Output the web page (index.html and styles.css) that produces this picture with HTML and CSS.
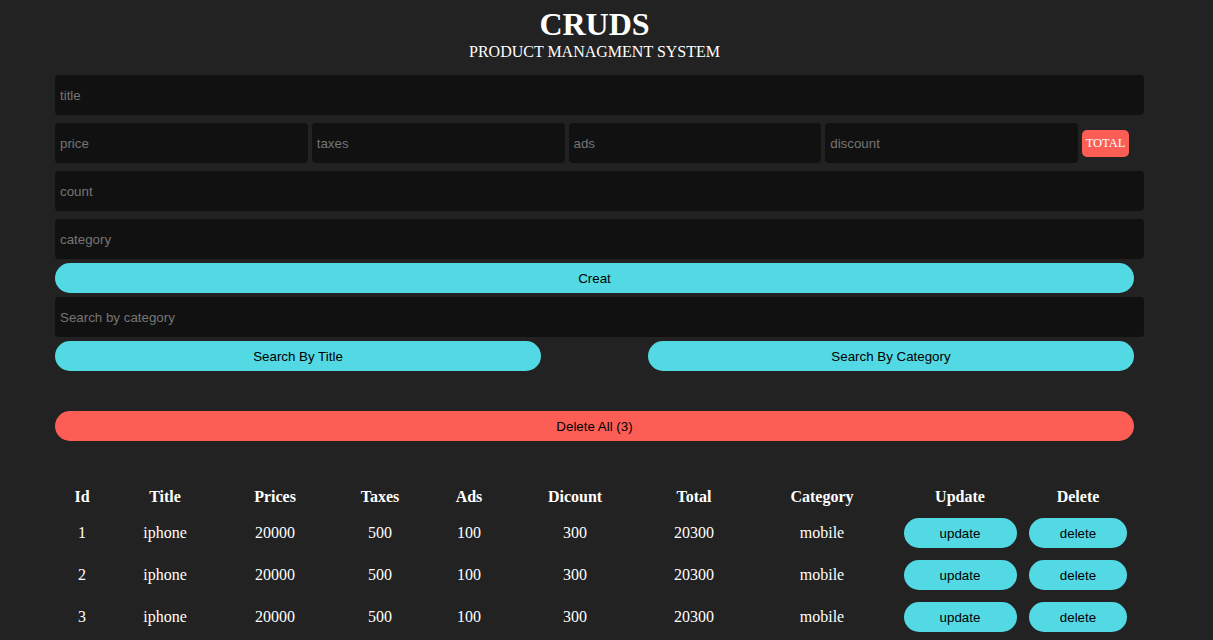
FILE: index.html
```html
<!DOCTYPE html>
<html>
<head>
<meta charset="utf-8">
<title>CRUDS</title>
<link rel="stylesheet" href="styles.css">
</head>
<body>
<div class="crud">
  <div class="head">
    <h1 class="logo">CRUDS</h1>
    <p class="sub">PRODUCT MANAGMENT SYSTEM</p>
  </div>
  <div class="inputs">
    <input class="field" type="text" placeholder="title">
    <div class="price">
      <input class="field small" type="text" placeholder="price">
      <input class="field small" type="text" placeholder="taxes">
      <input class="field small" type="text" placeholder="ads">
      <input class="field small" type="text" placeholder="discount">
      <small class="total">TOTAL</small>
    </div>
    <input class="field" type="text" placeholder="count">
    <input class="field last" type="text" placeholder="category">
    <button class="btn wide">Creat</button>
  </div>
  <div class="search">
    <input class="field" type="text" placeholder="Search by category">
    <div class="btnsearch">
      <button class="btn half">Search By Title</button>
      <button class="btn half">Search By Category</button>
    </div>
  </div>
  <button class="btn wide danger">Delete All (3)</button>
  <table class="outputs">
    <colgroup>
      <col class="c-id"><col class="c-title"><col class="c-price"><col class="c-tax"><col class="c-ads"><col class="c-disc"><col class="c-total"><col class="c-cat"><col class="c-upd"><col class="c-del">
    </colgroup>
    <thead>
      <tr><th>Id</th><th>Title</th><th>Prices</th><th>Taxes</th><th>Ads</th><th>Dicount</th><th>Total</th><th>Category</th><th>Update</th><th>Delete</th></tr>
    </thead>
    <tbody>
      <tr><td>1</td><td>iphone</td><td>20000</td><td>500</td><td>100</td><td>300</td><td>20300</td><td>mobile</td><td><button class="btn upd">update</button></td><td><button class="btn del">delete</button></td></tr>
      <tr><td>2</td><td>iphone</td><td>20000</td><td>500</td><td>100</td><td>300</td><td>20300</td><td>mobile</td><td><button class="btn upd">update</button></td><td><button class="btn del">delete</button></td></tr>
      <tr><td>3</td><td>iphone</td><td>20000</td><td>500</td><td>100</td><td>300</td><td>20300</td><td>mobile</td><td><button class="btn upd">update</button></td><td><button class="btn del">delete</button></td></tr>
    </tbody>
  </table>
</div>
</body>
</html>
```
FILE: styles.css
```css
html, body {
  margin: 0;
  padding: 0;
  background: #222222;
  color: #ffffff;
  font-family: "Liberation Serif", "Times New Roman", serif;
  overflow: hidden;
}
.crud {
  width: 1089px;
  margin-left: 55px;
  display: flex;
  flex-direction: column;
}
.head {
  width: 1079px;
  text-align: center;
  padding-top: 6px;
}
.logo {
  margin: 0;
  font-size: 32px;
  line-height: 37px;
  font-weight: bold;
}
.sub {
  margin: 0;
  font-size: 16px;
  line-height: 18px;
}
.inputs {
  display: flex;
  flex-direction: column;
  margin-top: 14px;
}
.field {
  box-sizing: border-box;
  width: 1089px;
  height: 40px;
  border: none;
  outline: none;
  border-radius: 4px;
  background: #111111;
  color: #ffffff;
  padding: 0 5px;
  font-family: "Liberation Sans", Arial, sans-serif;
  font-size: 13.33px;
  margin: 0 0 8px 0;
}
.field::placeholder {
  color: #757575;
}
.field.last {
  margin-bottom: 4px;
}
.price {
  display: flex;
  align-items: center;
  gap: 4px;
  margin-bottom: 8px;
}
.price .field.small {
  width: 252.75px;
  margin: 0;
}
.total {
  box-sizing: border-box;
  width: 47px;
  height: 27px;
  background: #fc5e55;
  color: #ffffff;
  border-radius: 5px;
  font-size: 12.5px;
  display: flex;
  align-items: center;
  justify-content: center;
}
.btn {
  border: none;
  outline: none;
  cursor: pointer;
  height: 30px;
  border-radius: 15px;
  background: #53d9e3;
  color: #000000;
  font-family: "Liberation Sans", Arial, sans-serif;
  font-size: 13.33px;
  padding: 0;
}
.wide {
  width: 1079px;
}
.search {
  display: flex;
  flex-direction: column;
  margin-top: 4px;
}
.search .field {
  margin-bottom: 4px;
}
.btnsearch {
  width: 1079px;
  display: flex;
  justify-content: space-between;
}
.half {
  width: 486px;
}
.danger {
  background: #fc5e55;
  margin-top: 40px;
}
.outputs {
  width: 1080px;
  table-layout: fixed;
  border-collapse: collapse;
  margin-top: 41px;
  text-align: center;
  font-size: 16px;
}
.outputs th {
  height: 30px;
  padding: 0;
  font-weight: bold;
}
.outputs td {
  height: 42px;
  padding: 0;
}
.c-id { width: 54px; }
.c-title { width: 112px; }
.c-price { width: 108px; }
.c-tax { width: 102px; }
.c-ads { width: 76px; }
.c-disc { width: 136px; }
.c-total { width: 102px; }
.c-cat { width: 154px; }
.c-upd { width: 122px; }
.c-del { width: 114px; }
.upd {
  width: 113px;
  display: block;
  margin: 0 auto;
}
.del {
  width: 98px;
  display: block;
  margin: 0 auto;
}
```
